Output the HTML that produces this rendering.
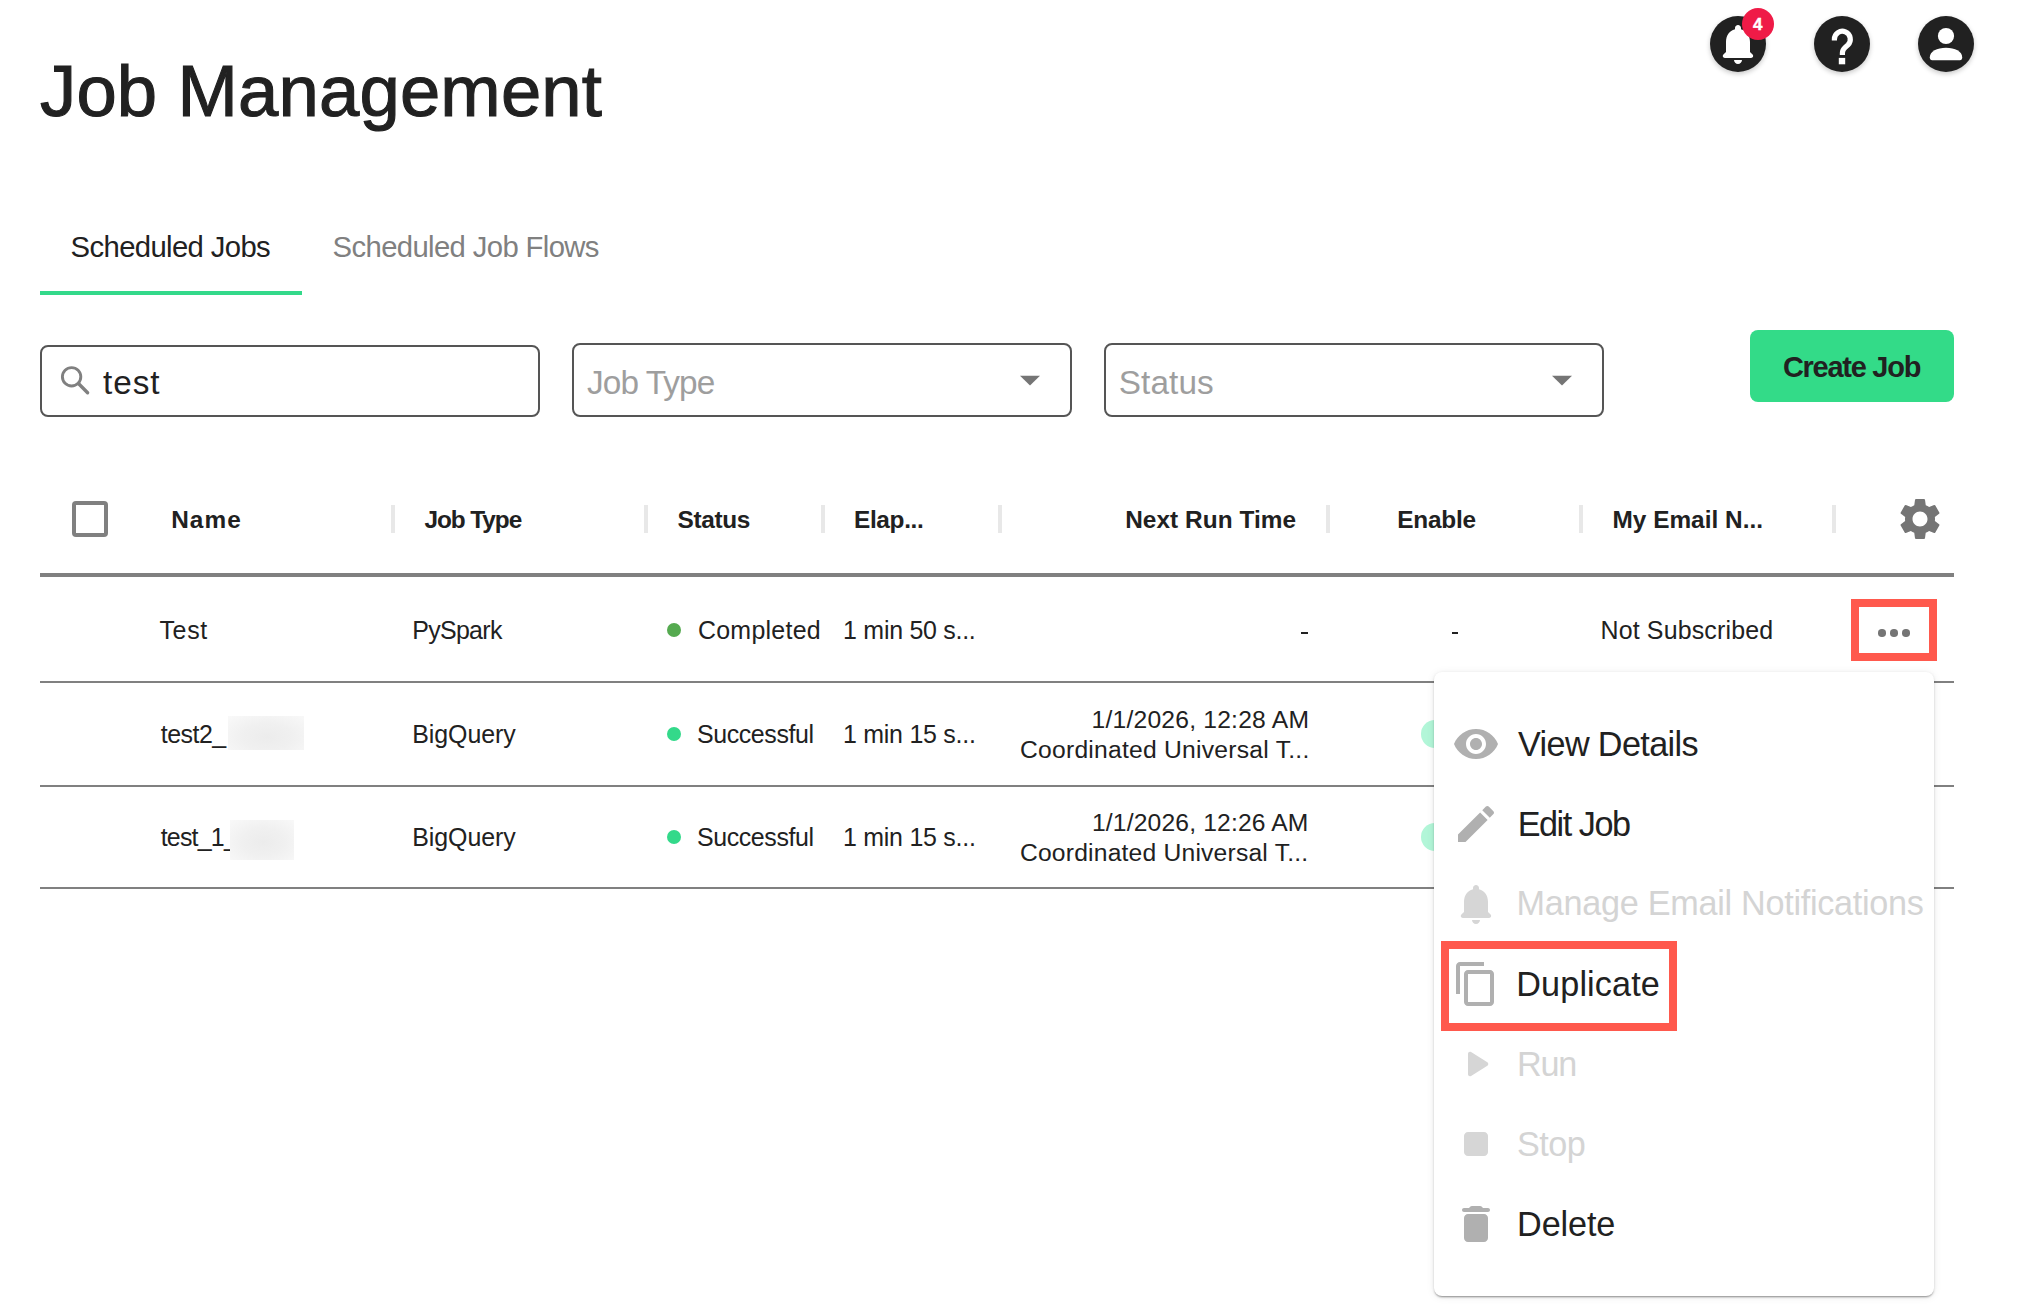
<!DOCTYPE html>
<html><head><meta charset="utf-8"><title>Job Management</title>
<style>
html,body{margin:0;padding:0;background:#fff}
body{position:relative;width:2018px;height:1306px;overflow:hidden;font-family:"Liberation Sans",sans-serif;color:#212121}
.t{position:absolute;white-space:pre;line-height:1}
.a{position:absolute;box-sizing:border-box}
svg{position:absolute;overflow:visible}
</style></head><body>

<!-- top-right icons -->
<div class="a" style="left:1710px;top:16px;width:56px;height:56px;border-radius:50%;background:#212121;box-shadow:0 2px 5px rgba(0,0,0,.22)"></div>
<div class="a" style="left:1814px;top:16px;width:56px;height:56px;border-radius:50%;background:#212121;box-shadow:0 2px 5px rgba(0,0,0,.22)"></div>
<div class="a" style="left:1918px;top:16px;width:56px;height:56px;border-radius:50%;background:#212121;box-shadow:0 2px 5px rgba(0,0,0,.22)"></div>
<svg style="left:1714px;top:20px" width="48" height="48" viewBox="0 0 24 24"><path fill="#fff" d="M12 22c1.1 0 2-.9 2-2h-4c0 1.1.9 2 2 2zm6-6v-5c0-3.07-1.63-5.64-4.5-6.32V4c0-.83-.67-1.5-1.5-1.5s-1.5.67-1.5 1.5v.68C7.64 5.36 6 7.92 6 11v5l-1.29 1.29c-.63.63-.19 1.71.7 1.71h13.17c.89 0 1.34-1.08.71-1.71L18 16z"/></svg>
<div class="a" style="left:1742px;top:8px;width:32px;height:32px;border-radius:50%;background:#ef1b47"></div>
<div class="t" style="left:1753px;top:16px;font-size:17px;font-weight:700;color:#fff;-webkit-text-stroke:0.4px #fff">4</div>
<svg style="left:1814px;top:16px" width="56" height="56" viewBox="0 0 56 56">
 <path d="M20.4 24.6 L20.4 23.25 A7.95 7.95 0 1 1 33.97 28.87 L31.2 31.4 Q28.4 34 28.4 37 L28.4 38.9" fill="none" stroke="#fff" stroke-width="5.2"/>
 <rect x="24.8" y="41.9" width="6.4" height="6.4" fill="#fff"/>
</svg>
<svg style="left:1918px;top:16px" width="56" height="56" viewBox="0 0 56 56">
 <circle cx="28" cy="20" r="8.1" fill="#fff"/>
 <path d="M11.8 41.3 C11.8 35.6 19 31.8 28 31.8 C37 31.8 44.2 35.6 44.2 41.3 C44.2 43.3 43.4 44.3 41.8 44.3 L14.2 44.3 C12.6 44.3 11.8 43.3 11.8 41.3 Z" fill="#fff"/>
</svg>

<!-- tab underline -->
<div class="a" style="left:40px;top:291px;width:262px;height:4px;background:#33d98a"></div>

<!-- search + selects -->
<div class="a" style="left:40px;top:345px;width:500px;height:72px;border:2px solid #555;border-radius:8px"></div>
<svg style="left:40px;top:345px" width="80" height="72" viewBox="0 0 80 72">
 <circle cx="31.6" cy="31.8" r="9.2" fill="none" stroke="#808080" stroke-width="2.9"/>
 <line x1="39.2" y1="39.3" x2="47.6" y2="47.7" stroke="#808080" stroke-width="3.4" stroke-linecap="round"/>
</svg>
<div class="a" style="left:572px;top:343px;width:500px;height:74px;border:2px solid #555;border-radius:8px"></div>
<div class="a" style="left:1104px;top:343px;width:500px;height:74px;border:2px solid #555;border-radius:8px"></div>
<svg style="left:1020px;top:375px" width="20" height="11" viewBox="0 0 20 11"><path d="M0 0.8 L10 10.6 L20 0.8 Z" fill="#757575"/></svg>
<svg style="left:1552px;top:375px" width="20" height="11" viewBox="0 0 20 11"><path d="M0 0.8 L10 10.6 L20 0.8 Z" fill="#757575"/></svg>

<!-- create button -->
<div class="a" style="left:1750px;top:330px;width:204px;height:72px;border-radius:8px;background:#33db88"></div>

<!-- table header -->
<div class="a" style="left:72px;top:501px;width:36px;height:36px;background:#808080;border-radius:4px"></div>
<div class="a" style="left:75.6px;top:504.6px;width:28.8px;height:28.8px;background:#fff"></div>
<div class="a" style="left:391px;top:505px;width:4px;height:28px;background:#e8e8e8"></div>
<div class="a" style="left:644px;top:505px;width:4px;height:28px;background:#e8e8e8"></div>
<div class="a" style="left:821px;top:505px;width:4px;height:28px;background:#e8e8e8"></div>
<div class="a" style="left:998px;top:505px;width:4px;height:28px;background:#e8e8e8"></div>
<div class="a" style="left:1326px;top:505px;width:4px;height:28px;background:#e8e8e8"></div>
<div class="a" style="left:1579px;top:505px;width:4px;height:28px;background:#e8e8e8"></div>
<div class="a" style="left:1832px;top:505px;width:4px;height:28px;background:#e8e8e8"></div>
<svg style="left:1895px;top:494px" width="50" height="50" viewBox="0 0 24 24"><path fill="#757575" d="M19.14 12.94c.04-.3.06-.61.06-.94 0-.32-.02-.64-.07-.94l2.03-1.58c.18-.14.23-.41.12-.61l-1.92-3.32c-.12-.22-.37-.29-.59-.22l-2.39.96c-.5-.38-1.03-.7-1.62-.94l-.36-2.54c-.04-.24-.24-.41-.48-.41h-3.84c-.24 0-.43.17-.47.41l-.36 2.54c-.59.24-1.13.57-1.62.94l-2.39-.96c-.22-.08-.47 0-.59.22L2.74 8.87c-.12.21-.08.47.12.61l2.03 1.58c-.05.3-.09.63-.09.94s.02.64.07.94l-2.03 1.58c-.18.14-.23.41-.12.61l1.92 3.32c.12.22.37.29.59.22l2.39-.96c.5.38 1.03.7 1.62.94l.36 2.54c.05.24.24.41.48.41h3.84c.24 0 .44-.17.47-.41l.36-2.54c.59-.24 1.13-.56 1.62-.94l2.39.96c.22.08.47 0 .59-.22l1.92-3.32c.12-.22.07-.47-.12-.61l-2.01-1.58zM12 15.6c-1.98 0-3.6-1.62-3.6-3.6s1.62-3.6 3.6-3.6 3.6 1.62 3.6 3.6-1.62 3.6-3.6 3.6z"/></svg>
<div class="a" style="left:40px;top:573px;width:1914px;height:4px;background:#808080"></div>

<!-- rows -->
<div class="a" style="left:40px;top:681px;width:1914px;height:2px;background:#808080"></div>
<div class="a" style="left:40px;top:785px;width:1914px;height:2px;background:#808080"></div>
<div class="a" style="left:40px;top:887px;width:1914px;height:2px;background:#808080"></div>
<div class="a" style="left:667px;top:623px;width:14px;height:14px;border-radius:50%;background:#55aa50"></div>
<div class="a" style="left:667px;top:727px;width:14px;height:14px;border-radius:50%;background:#33d98a"></div>
<div class="a" style="left:667px;top:830px;width:14px;height:14px;border-radius:50%;background:#33d98a"></div>
<!-- dashes are text -->
<div class="a" style="left:1301px;top:631.5px;width:6.5px;height:2px;background:#212121"></div>
<div class="a" style="left:1452px;top:631.5px;width:6px;height:2px;background:#212121"></div>
<!-- toggles (mostly hidden by menu) -->
<div class="a" style="left:1421px;top:719.5px;width:28px;height:28px;border-radius:50%;background:#b2f6d8"></div>
<div class="a" style="left:1421px;top:823px;width:28px;height:28px;border-radius:50%;background:#b2f6d8"></div>
<!-- more button -->
<div class="a" style="left:1851px;top:599px;width:86px;height:62px;border:8px solid #ff594d"></div>
<div class="a" style="left:1878px;top:629px;width:7.5px;height:7.5px;border-radius:50%;background:#757575"></div>
<div class="a" style="left:1890.2px;top:629px;width:7.5px;height:7.5px;border-radius:50%;background:#757575"></div>
<div class="a" style="left:1902.3px;top:629px;width:7.5px;height:7.5px;border-radius:50%;background:#757575"></div>

<div class="t" style="left:40.0px;top:55px;font-size:72.47px;letter-spacing:0.15px;font-weight:400;color:#212121;-webkit-text-stroke:1.1px #212121;">Job Management</div>
<div class="t" style="left:70.6px;top:232px;font-size:29.28px;letter-spacing:-0.63px;font-weight:400;color:#212121;">Scheduled Jobs</div>
<div class="t" style="left:332.6px;top:232px;font-size:29.28px;letter-spacing:-0.63px;font-weight:400;color:#808080;">Scheduled Job Flows</div>
<div class="t" style="left:103.1px;top:366px;font-size:33.33px;letter-spacing:0.90px;font-weight:400;color:#212121;">test</div>
<div class="t" style="left:587.0px;top:366px;font-size:33.33px;letter-spacing:-0.91px;font-weight:400;color:#9e9e9e;">Job Type</div>
<div class="t" style="left:1118.8px;top:366px;font-size:33.33px;letter-spacing:0.08px;font-weight:400;color:#9e9e9e;">Status</div>
<div class="t" style="left:1782.9px;top:353px;font-size:28.99px;letter-spacing:-1.26px;font-weight:700;color:#212121;">Create Job</div>
<div class="t" style="left:171.2px;top:508px;font-size:24.38px;letter-spacing:1.07px;font-weight:700;color:#212121;">Name</div>
<div class="t" style="left:424.5px;top:508px;font-size:24.38px;letter-spacing:-1.07px;font-weight:700;color:#212121;">Job Type</div>
<div class="t" style="left:677.6px;top:508px;font-size:24.38px;letter-spacing:-0.34px;font-weight:700;color:#212121;">Status</div>
<div class="t" style="left:854.0px;top:508px;font-size:24.38px;letter-spacing:-0.33px;font-weight:700;color:#212121;">Elap...</div>
<div class="t" style="left:1125.2px;top:508px;font-size:24.38px;letter-spacing:0.05px;font-weight:700;color:#212121;">Next Run Time</div>
<div class="t" style="left:1397.3px;top:508px;font-size:24.38px;letter-spacing:-0.22px;font-weight:700;color:#212121;">Enable</div>
<div class="t" style="left:1612.5px;top:508px;font-size:24.38px;letter-spacing:0.01px;font-weight:700;color:#212121;">My Email N...</div>
<div class="t" style="left:159.4px;top:618px;font-size:24.94px;letter-spacing:0.70px;font-weight:400;color:#212121;">Test</div>
<div class="t" style="left:412.2px;top:618px;font-size:24.94px;letter-spacing:-0.68px;font-weight:400;color:#212121;">PySpark</div>
<div class="t" style="left:697.9px;top:618px;font-size:24.94px;letter-spacing:0.28px;font-weight:400;color:#212121;">Completed</div>
<div class="t" style="left:843.1px;top:618px;font-size:24.94px;letter-spacing:-0.26px;font-weight:400;color:#212121;">1 min 50 s...</div>
<div class="t" style="left:1600.5px;top:618px;font-size:24.94px;letter-spacing:0.16px;font-weight:400;color:#212121;">Not Subscribed</div>
<div class="t" style="left:160.7px;top:722px;font-size:24.94px;letter-spacing:-0.48px;font-weight:400;color:#212121;">test2_</div>
<div class="t" style="left:412.2px;top:722px;font-size:24.94px;letter-spacing:-0.06px;font-weight:400;color:#212121;">BigQuery</div>
<div class="t" style="left:696.9px;top:722px;font-size:24.94px;letter-spacing:-0.38px;font-weight:400;color:#212121;">Successful</div>
<div class="t" style="left:843.0px;top:722px;font-size:24.94px;letter-spacing:-0.25px;font-weight:400;color:#212121;">1 min 15 s...</div>
<div class="t" style="left:1091.5px;top:708px;font-size:24.66px;letter-spacing:0.21px;font-weight:400;color:#212121;">1/1/2026, 12:28 AM</div>
<div class="t" style="left:1020.0px;top:738px;font-size:24.66px;letter-spacing:0.24px;font-weight:400;color:#212121;">Coordinated Universal T...</div>
<div class="t" style="left:160.7px;top:825px;font-size:24.94px;letter-spacing:-0.78px;font-weight:400;color:#212121;">test_1_</div>
<div class="t" style="left:412.2px;top:825px;font-size:24.94px;letter-spacing:-0.06px;font-weight:400;color:#212121;">BigQuery</div>
<div class="t" style="left:696.9px;top:825px;font-size:24.94px;letter-spacing:-0.38px;font-weight:400;color:#212121;">Successful</div>
<div class="t" style="left:843.0px;top:825px;font-size:24.94px;letter-spacing:-0.25px;font-weight:400;color:#212121;">1 min 15 s...</div>
<div class="t" style="left:1092.0px;top:811px;font-size:24.66px;letter-spacing:0.15px;font-weight:400;color:#212121;">1/1/2026, 12:26 AM</div>
<div class="t" style="left:1019.9px;top:841px;font-size:24.66px;letter-spacing:0.20px;font-weight:400;color:#212121;">Coordinated Universal T...</div>

<!-- redaction blurs -->
<div class="a" style="left:228px;top:716px;width:76px;height:34px;background:radial-gradient(ellipse at 52% 62%,#ececec 0%,#f0f0f0 45%,#f9f9f9 100%)"></div>
<div class="a" style="left:230px;top:820px;width:64px;height:40px;background:radial-gradient(ellipse at 52% 55%,#ececec 0%,#f0f0f0 45%,#f9f9f9 100%)"></div>

<!-- menu -->
<div class="a" style="left:1434px;top:672px;width:500px;height:624px;border-radius:8px;background:#fff;box-shadow:0 2px 2px -1px rgba(0,0,0,.35),0 1px 3px rgba(0,0,0,.12),0 1px 8px rgba(0,0,0,.08)"></div>
<svg style="left:1452px;top:720px" width="48" height="48" viewBox="0 0 24 24"><path fill="#b0b0b0" d="M12 4.5C7 4.5 2.73 7.61 1 12c1.73 4.39 6 7.5 11 7.5s9.27-3.11 11-7.5c-1.73-4.39-6-7.5-11-7.5zM12 17c-2.76 0-5-2.24-5-5s2.24-5 5-5 5 2.24 5 5-2.24 5-5 5zm0-8c-1.66 0-3 1.34-3 3s1.34 3 3 3 3-1.34 3-3-1.34-3-3-3z"/></svg>
<svg style="left:1452px;top:800px" width="48" height="48" viewBox="0 0 24 24"><path fill="#b0b0b0" d="M3 17.25V21h3.75L17.81 9.94l-3.75-3.75L3 17.25zM20.71 7.04c.39-.39.39-1.02 0-1.41l-2.34-2.34c-.39-.39-1.02-.39-1.41 0l-1.83 1.83 3.75 3.75 1.83-1.83z"/></svg>
<svg style="left:1452px;top:880px" width="48" height="48" viewBox="0 0 24 24"><path fill="#d6d6d6" d="M12 22c1.1 0 2-.9 2-2h-4c0 1.1.9 2 2 2zm6-6v-5c0-3.07-1.63-5.64-4.5-6.32V4c0-.83-.67-1.5-1.5-1.5s-1.5.67-1.5 1.5v.68C7.64 5.36 6 7.92 6 11v5l-1.29 1.29c-.63.63-.19 1.71.7 1.71h13.17c.89 0 1.34-1.08.71-1.71L18 16z"/></svg>
<svg style="left:1452px;top:960px" width="48" height="48" viewBox="0 0 24 24"><path fill="#b0b0b0" d="M16 1H4c-1.1 0-2 .9-2 2v14h2V3h12V1zm3 4H8c-1.1 0-2 .9-2 2v14c0 1.1.9 2 2 2h11c1.1 0 2-.9 2-2V7c0-1.1-.9-2-2-2zm0 16H8V7h11v14z"/></svg>
<svg style="left:1452px;top:1040px" width="48" height="48" viewBox="0 0 24 24"><path fill="#d6d6d6" d="M8 6.82v10.36c0 .79.87 1.27 1.54.84l8.14-5.18c.62-.39.62-1.29 0-1.69L9.54 5.98C8.87 5.55 8 6.03 8 6.82z"/></svg>
<svg style="left:1452px;top:1120px" width="48" height="48" viewBox="0 0 24 24"><path fill="#d6d6d6" d="M8 6h8c1.1 0 2 .9 2 2v8c0 1.1-.9 2-2 2H8c-1.1 0-2-.9-2-2V8c0-1.1.9-2 2-2z"/></svg>
<svg style="left:1452px;top:1200px" width="48" height="48" viewBox="0 0 24 24"><path fill="#b0b0b0" d="M6 19c0 1.1.9 2 2 2h8c1.1 0 2-.9 2-2V9c0-1.1-.9-2-2-2H8c-1.1 0-2 .9-2 2v10zM18 4h-2.5l-.71-.71c-.18-.18-.44-.29-.7-.29H9.91c-.26 0-.52.11-.7.29L8.5 4H6c-.55 0-1 .45-1 1s.45 1 1 1h12c.55 0 1-.45 1-1s-.45-1-1-1z"/></svg>
<div class="a" style="left:1441px;top:941px;width:236px;height:90px;border:8px solid #ff594d"></div>

<div class="t" style="left:1518.0px;top:727px;font-size:34.21px;letter-spacing:-0.63px;font-weight:400;color:#212121;">View Details</div>
<div class="t" style="left:1517.7px;top:807px;font-size:34.21px;letter-spacing:-1.47px;font-weight:400;color:#212121;">Edit Job</div>
<div class="t" style="left:1516.5px;top:886px;font-size:34.21px;letter-spacing:-0.28px;font-weight:400;color:#d4d4d4;">Manage Email Notifications</div>
<div class="t" style="left:1516.3px;top:967px;font-size:34.21px;letter-spacing:0.12px;font-weight:400;color:#212121;">Duplicate</div>
<div class="t" style="left:1517.1px;top:1047px;font-size:34.21px;letter-spacing:-1.25px;font-weight:400;color:#d4d4d4;">Run</div>
<div class="t" style="left:1517.0px;top:1127px;font-size:34.21px;letter-spacing:-0.53px;font-weight:400;color:#d4d4d4;">Stop</div>
<div class="t" style="left:1517.1px;top:1207px;font-size:34.21px;letter-spacing:-0.14px;font-weight:400;color:#212121;">Delete</div>
</body></html>
